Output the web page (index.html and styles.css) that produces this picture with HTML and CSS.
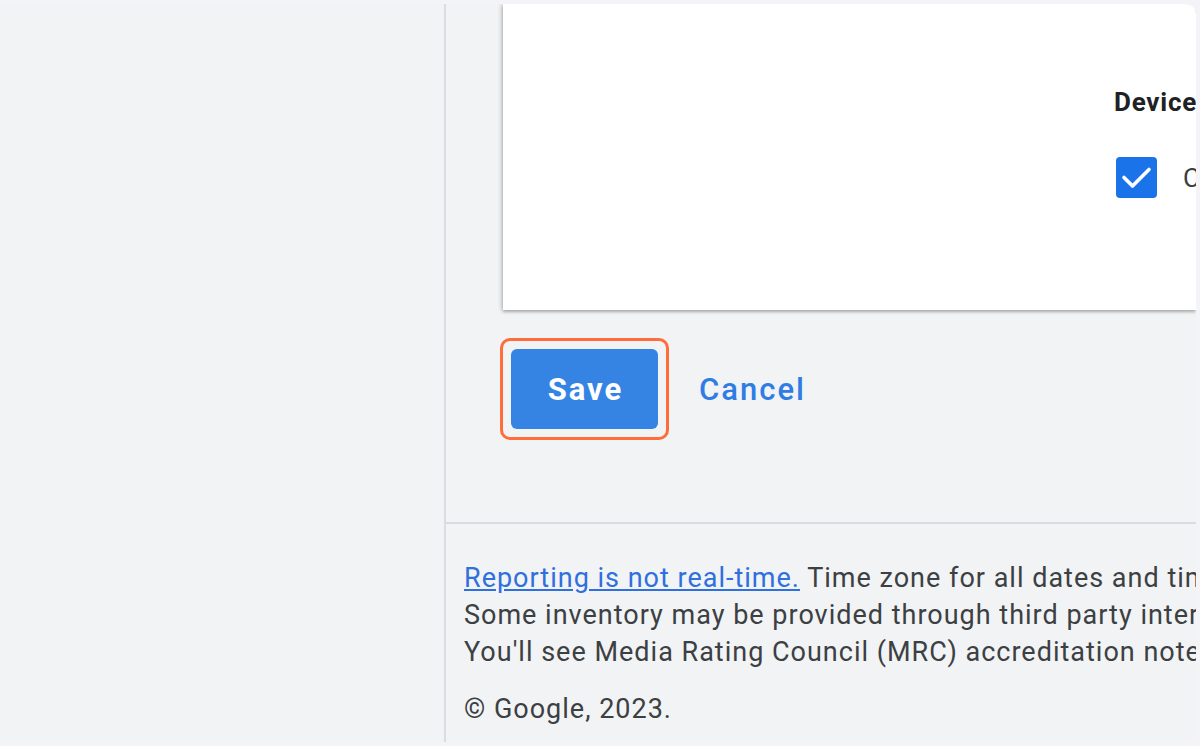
FILE: index.html
```html
<!DOCTYPE html>
<html lang="en">
<head>
<meta charset="utf-8">
<title>Settings</title>
<link rel="stylesheet" href="styles.css">
</head>
<body>
<div class="frame">
  <div class="app">
    <aside class="sidebar"></aside>
    <main class="main">
      <section class="card">
        <div class="group">
          <h3 class="group-title">Device categories</h3>
          <label class="check-row">
            <span class="checkbox">
              <svg viewBox="0 0 41 41" width="41" height="41"><path d="M8 20.5l8.5 8.5L33 12.5" fill="none" stroke="#fff" stroke-width="3.6" stroke-linecap="round" stroke-linejoin="round"/></svg>
            </span>
            <span class="check-label">Computers</span>
          </label>
        </div>
      </section>
      <div class="actions">
        <div class="highlight">
          <button class="btn-save">Save</button>
        </div>
        <button class="btn-cancel">Cancel</button>
      </div>
      <footer class="footer">
        <p class="notes"><a href="#" class="link">Reporting is not real-time.</a> Time zone for all dates and times: (GMT-08:00) Pacific Time.<br>Some inventory may be provided through third party intermediaries.<br>You'll see Media Rating Council (MRC) accreditation noted in the column header's tooltip for each metric that's accredited.</p>
        <p class="copyright">© Google, 2023.</p>
      </footer>
    </main>
  </div>
</div>
</body>
</html>
```

FILE: styles.css
```css
* { box-sizing: border-box; }
html, body { margin: 0; padding: 0; }
body {
  width: 1200px;
  height: 746px;
  overflow: hidden;
  background: #f4f3f8;
  font-family: Roboto, "Noto Sans", Arial, sans-serif;
}
.frame {
  padding: 4px 4px 4px 0;
  height: 746px;
}
.app {
  height: 738px;
  background: #f1f3f4;
  border-radius: 0 10px 10px 0;
  overflow: hidden;
  display: flex;
}
.sidebar {
  width: 446px;
  flex: none;
  border-right: 2px solid #dadce0;
}
.main {
  flex: 1;
  min-width: 0;
  display: flex;
  flex-direction: column;
}
.card {
  margin-left: 57px;
  height: 306px;
  background: #fff;
  box-shadow: 0 2px 3px rgba(60,64,67,.35), -2px 0 4px rgba(60,64,67,.18);
  overflow: hidden;
  padding: 80px 0 0 611px;
  white-space: nowrap;
}
.group-title {
  margin: 0;
  font-size: 26px;
  letter-spacing: 0.8px;
  font-weight: 700;
  color: #202124;
  line-height: 36px;
}
.check-row {
  display: flex;
  align-items: center;
  margin-top: 37px;
  margin-left: 2px;
}
.checkbox {
  width: 41px;
  height: 41px;
  border-radius: 4px;
  background: #1a73e8;
  display: flex;
  flex: none;
}
.check-label {
  margin-left: 26px;
  font-size: 26px;
  color: #3c4043;
}
.actions {
  margin-top: 28px;
  margin-left: 54px;
  display: flex;
  align-items: center;
}
.highlight {
  border: 3px solid #ff6d3b;
  border-radius: 10px;
  padding: 8px;
}
.btn-save {
  display: block;
  width: 147px;
  height: 80px;
  border: none;
  border-radius: 6px;
  background: #3584e4;
  color: #fff;
  font-family: Roboto, "Noto Sans", Arial, sans-serif;
  font-size: 31px;
  letter-spacing: 2px;
  font-weight: 700;
  padding: 0 0 0 2px;
}
.btn-cancel {
  margin-left: 22px;
  padding: 0 8px;
  border: none;
  background: transparent;
  color: #2f7de4;
  font-family: Roboto, "Noto Sans", Arial, sans-serif;
  font-size: 31px;
  letter-spacing: 2px;
  font-weight: 500;
}
.footer {
  margin-top: 82px;
  border-top: 2px solid #dadce0;
  padding: 36px 0 0 18px;
  white-space: nowrap;
  color: #3c4043;
  font-size: 27px;
  letter-spacing: 1px;
}
.notes {
  margin: 0;
  line-height: 37px;
}
.link {
  color: #2f6fde;
  text-decoration: underline;
}
.copyright {
  margin: 20px 0 0;
  line-height: 37px;
}
```
